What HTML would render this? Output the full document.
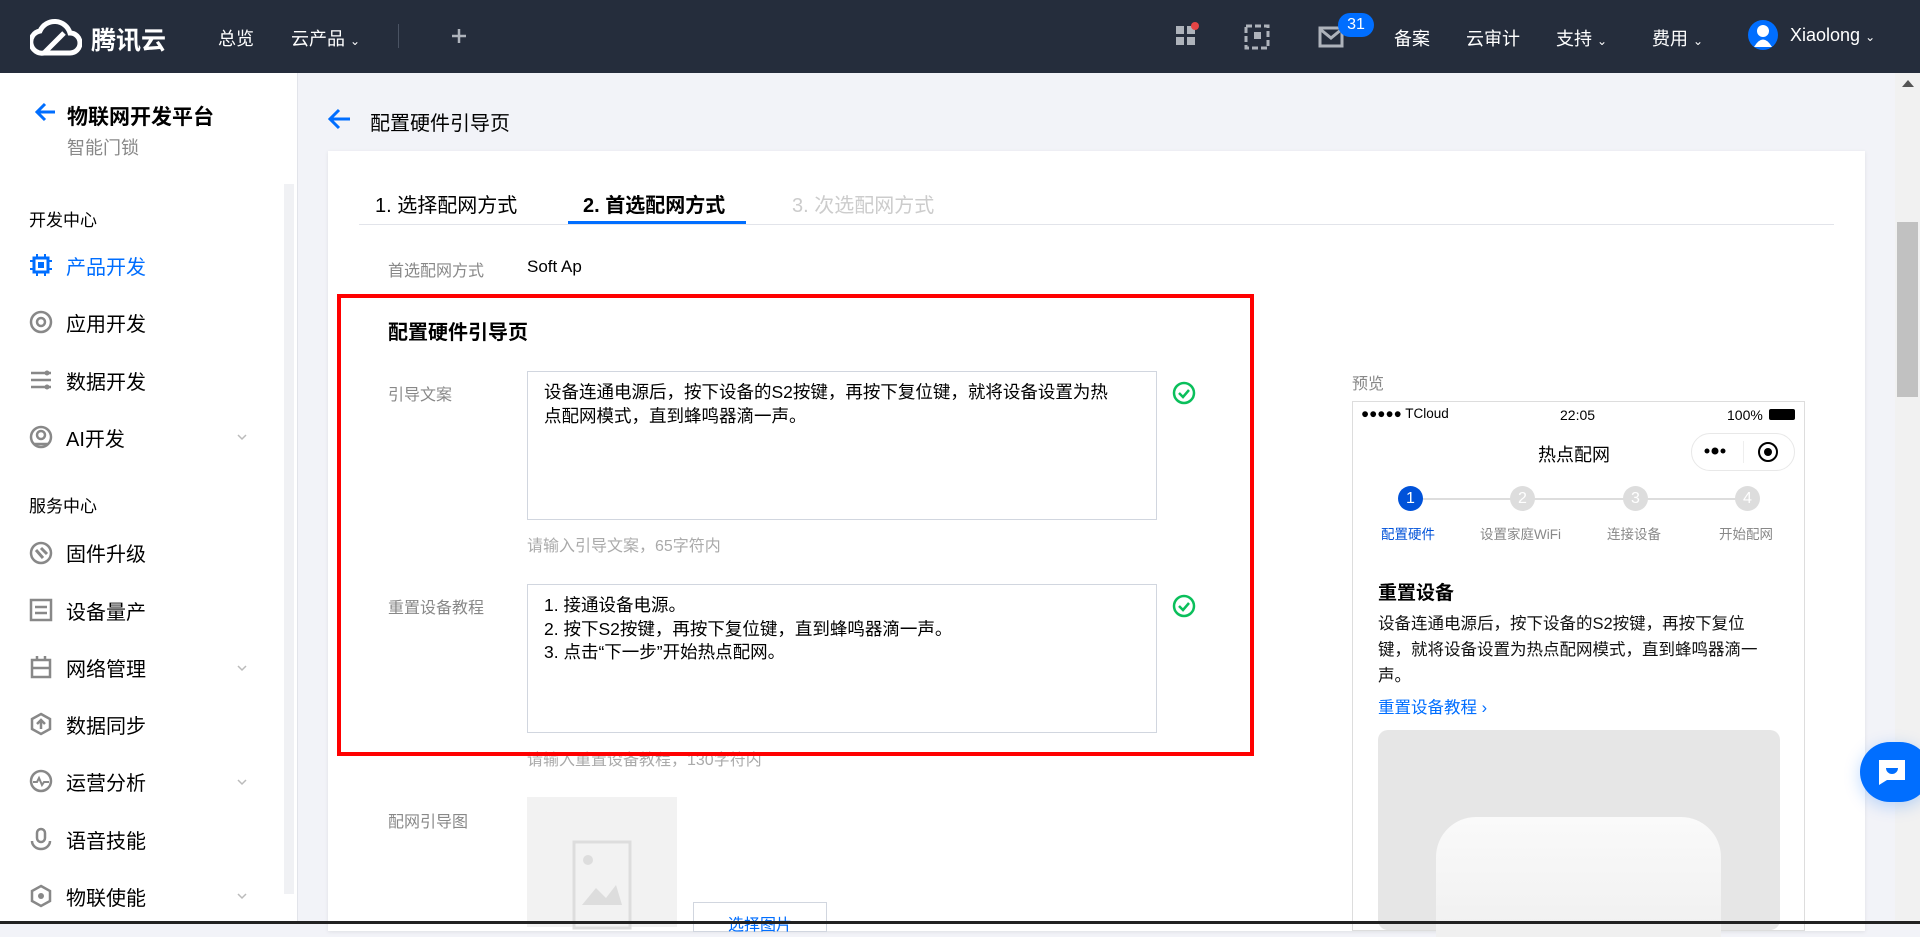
<!DOCTYPE html>
<html><head><meta charset="utf-8"><style>
*{margin:0;padding:0;box-sizing:border-box}
body{width:1920px;height:924px;overflow:hidden;background:#f2f3f8;font-family:"Liberation Sans","Noto Sans CJK SC",sans-serif;position:relative;color:#000}
.a{position:absolute;white-space:nowrap}
.hdr{position:absolute;left:0;top:0;width:1920px;height:73px;background:#252d3c}
.hw{color:#fff;font-size:18px}
.side{position:absolute;left:0;top:73px;width:298px;height:851px;background:#fff;border-right:1px solid #e2e4ea}
.mi{font-size:20px;color:#000;left:66px}
.ic{left:29px;width:24px;height:24px}
.chev{left:236px;width:12px;height:8px}
.card{position:absolute;left:328px;top:151px;width:1537px;height:780px;background:#fff;box-shadow:0 1px 4px rgba(0,0,0,.08)}
.lbl{font-size:16px;color:#888}
.ta{position:absolute;border:1px solid #d1d6df;background:#fff;font-size:17.5px;line-height:23.5px;padding:9px 16px;color:#000;white-space:nowrap}
.hint{font-size:16px;color:#aaa}
</style></head><body>
<div class="hdr"></div>
<svg class="a" style="left:30px;top:17px" width="52" height="40" viewBox="0 0 52 40"><path d="M14 36 H40 A10 10 0 0 0 40 16 A16 16 0 0 0 10 14 A11 11 0 0 0 14 36 Z" fill="none" stroke="#fff" stroke-width="5"/><path d="M14 36 L34 16" stroke="#fff" stroke-width="5"/></svg>
<div class="a" style="left:91px;top:21px;color:#fff;font-size:25px;font-weight:bold">腾讯云</div>
<div class="a hw" style="left:218px;top:25px">总览</div>
<div class="a hw" style="left:291px;top:25px">云产品 <span style="font-size:12px">⌄</span></div>
<div class="a" style="left:398px;top:24px;width:1px;height:24px;background:#4a5363"></div>
<svg class="a" style="left:451px;top:28px" width="16" height="16"><path d="M8 1v14M1 8h14" stroke="#aeb3bb" stroke-width="2.5"/></svg>
<svg class="a" style="left:1174px;top:22px" width="26" height="28"><rect x="2" y="4" width="8" height="8" fill="#aeb3bb"/><rect x="13" y="4" width="8" height="8" fill="#aeb3bb"/><rect x="2" y="15" width="8" height="8" fill="#aeb3bb"/><rect x="13" y="15" width="8" height="8" fill="#aeb3bb"/><circle cx="21" cy="4" r="4" fill="#e54545"/></svg>
<svg class="a" style="left:1244px;top:24px" width="26" height="26"><rect x="2" y="2" width="22" height="22" fill="none" stroke="#aeb3bb" stroke-width="3" stroke-dasharray="6 3"/><rect x="10" y="8" width="7" height="7" fill="#aeb3bb"/></svg>
<svg class="a" style="left:1318px;top:26px" width="26" height="22"><rect x="2" y="2" width="22" height="18" fill="none" stroke="#aeb3bb" stroke-width="3"/><path d="M2 3 L13 12 L24 3" fill="none" stroke="#aeb3bb" stroke-width="3"/></svg>
<div class="a" style="left:1338px;top:13px;width:36px;height:24px;border-radius:12px;background:#006eff;color:#fff;font-size:16px;text-align:center;line-height:24px">31</div>
<div class="a hw" style="left:1394px;top:25px">备案</div>
<div class="a hw" style="left:1466px;top:25px">云审计</div>
<div class="a hw" style="left:1556px;top:25px">支持 <span style="font-size:12px">⌄</span></div>
<div class="a hw" style="left:1652px;top:25px">费用 <span style="font-size:12px">⌄</span></div>
<svg class="a" style="left:1748px;top:20px" width="30" height="30"><circle cx="15" cy="15" r="15" fill="#006eff"/><circle cx="15" cy="11" r="6" fill="#fff"/><path d="M6 27 Q15 12 24 27 Z" fill="#fff"/></svg>
<div class="a hw" style="left:1790px;top:25px">Xiaolong <span style="font-size:12px">⌄</span></div>

<div class="side"></div>
<div class="a" style="left:284px;top:184px;width:10px;height:710px;background:#f0f1f4"></div>
<svg class="a" style="left:35px;top:102px" width="22" height="20"><path d="M20 10H3M10 2L2 10L10 18" fill="none" stroke="#006eff" stroke-width="3"/></svg>
<div class="a" style="left:67px;top:101px;font-size:21px;font-weight:bold">物联网开发平台</div>
<div class="a" style="left:67px;top:134px;font-size:18px;color:#888">智能门锁</div>
<div class="a" style="left:29px;top:206px;font-size:17px">开发中心</div>
<svg class="a ic" style="top:253px"><rect x="5" y="5" width="14" height="14" fill="none" stroke="#006eff" stroke-width="3"/><rect x="9" y="9" width="6" height="6" fill="#006eff"/><path d="M8 1v4M16 1v4M8 19v4M16 19v4M1 8h4M1 16h4M19 8h4M19 16h4" stroke="#006eff" stroke-width="2"/></svg>
<div class="a mi" style="top:251px;color:#006eff">产品开发</div>
<svg class="a ic" style="top:310px"><circle cx="12" cy="12" r="10" fill="none" stroke="#888" stroke-width="2.5"/><circle cx="12" cy="12" r="4" fill="none" stroke="#888" stroke-width="2.5"/></svg>
<div class="a mi" style="top:308px">应用开发</div>
<svg class="a ic" style="top:368px"><path d="M2 5h20M2 12h20M2 19h20" stroke="#888" stroke-width="2.5"/><circle cx="18" cy="5" r="2.5" fill="#888"/><circle cx="18" cy="19" r="2.5" fill="#888"/></svg>
<div class="a mi" style="top:366px">数据开发</div>
<svg class="a ic" style="top:425px"><circle cx="12" cy="12" r="10" fill="none" stroke="#888" stroke-width="2.5"/><circle cx="12" cy="10" r="4" fill="none" stroke="#888" stroke-width="2.5"/><path d="M5 19h14" stroke="#888" stroke-width="2.5"/></svg>
<div class="a mi" style="top:423px">AI开发</div>
<svg class="a chev" style="top:433px"><path d="M2 2l4 4 4-4" fill="none" stroke="#bbb" stroke-width="1.5"/></svg>
<div class="a" style="left:29px;top:492px;font-size:17px">服务中心</div>
<svg class="a ic" style="top:541px"><circle cx="12" cy="12" r="10" fill="none" stroke="#888" stroke-width="2.5"/><path d="M7 9l7 8M12 7l6 6" stroke="#888" stroke-width="3"/></svg>
<div class="a mi" style="top:538px">固件升级</div>
<svg class="a ic" style="top:598px"><rect x="2" y="2" width="20" height="20" fill="none" stroke="#888" stroke-width="2.5"/><path d="M6 9h12M6 15h12" stroke="#888" stroke-width="2.5"/></svg>
<div class="a mi" style="top:596px">设备量产</div>
<svg class="a ic" style="top:655px"><rect x="3" y="5" width="18" height="17" fill="none" stroke="#888" stroke-width="2.5"/><path d="M3 13h18M8 1v4M16 1v4" stroke="#888" stroke-width="2.5"/></svg>
<div class="a mi" style="top:653px">网络管理</div>
<svg class="a chev" style="top:664px"><path d="M2 2l4 4 4-4" fill="none" stroke="#bbb" stroke-width="1.5"/></svg>
<svg class="a ic" style="top:712px"><path d="M12 2L21 7V17L12 22L3 17V7Z" fill="none" stroke="#888" stroke-width="2.5"/><path d="M12 17V8M8 12l4-4 4 4" fill="none" stroke="#888" stroke-width="2.5"/></svg>
<div class="a mi" style="top:710px">数据同步</div>
<svg class="a ic" style="top:769px"><circle cx="12" cy="12" r="10" fill="none" stroke="#888" stroke-width="2.5"/><path d="M4 13h4l2-4 3 7 2-3h5" fill="none" stroke="#888" stroke-width="2"/></svg>
<div class="a mi" style="top:767px">运营分析</div>
<svg class="a chev" style="top:778px"><path d="M2 2l4 4 4-4" fill="none" stroke="#bbb" stroke-width="1.5"/></svg>
<svg class="a ic" style="top:827px"><rect x="8" y="2" width="8" height="13" rx="4" fill="none" stroke="#888" stroke-width="2.5"/><path d="M3 14a9 8 0 0 0 18 0" fill="none" stroke="#888" stroke-width="2.5"/></svg>
<div class="a mi" style="top:825px">语音技能</div>
<svg class="a ic" style="top:884px"><path d="M12 2L21 7V17L12 22L3 17V7Z" fill="none" stroke="#888" stroke-width="2.5"/><circle cx="12" cy="12" r="3" fill="#888"/></svg>
<div class="a mi" style="top:882px">物联使能</div>
<svg class="a chev" style="top:892px"><path d="M2 2l4 4 4-4" fill="none" stroke="#bbb" stroke-width="1.5"/></svg>

<svg class="a" style="left:328px;top:108px" width="24" height="22"><path d="M22 11H3M11 2L2 11L11 20" fill="none" stroke="#006eff" stroke-width="3"/></svg>
<div class="a" style="left:370px;top:107px;font-size:20px;color:#000">配置硬件引导页</div>

<div class="card"></div>
<div class="a" style="left:375px;top:189px;font-size:20px">1. 选择配网方式</div>
<div class="a" style="left:583px;top:189px;font-size:20px;font-weight:bold">2. 首选配网方式</div>
<div class="a" style="left:792px;top:189px;font-size:20px;color:#ccc">3. 次选配网方式</div>
<div class="a" style="left:359px;top:224px;width:1475px;height:1px;background:#e2e4ea"></div>
<div class="a" style="left:568px;top:221px;width:178px;height:3px;background:#006eff"></div>
<div class="a lbl" style="left:388px;top:257px">首选配网方式</div>
<div class="a" style="left:527px;top:257px;font-size:17px">Soft Ap</div>

<div class="a" style="left:388px;top:316px;font-size:20px;font-weight:bold">配置硬件引导页</div>
<div class="a lbl" style="left:388px;top:381px">引导文案</div>
<div class="ta" style="left:527px;top:371px;width:630px;height:149px">设备连通电源后，按下设备的S2按键，再按下复位键，就将设备设置为热<br>点配网模式，直到蜂鸣器滴一声。</div>
<svg class="a" style="left:1172px;top:381px" width="24" height="24"><circle cx="12" cy="12" r="10" fill="none" stroke="#0abf5b" stroke-width="2.5"/><path d="M7 12l4 4 6-7" fill="none" stroke="#0abf5b" stroke-width="2.5"/></svg>
<div class="a hint" style="left:527px;top:532px">请输入引导文案，65字符内</div>
<div class="a lbl" style="left:388px;top:594px">重置设备教程</div>
<div class="ta" style="left:527px;top:584px;width:630px;height:149px">1. 接通设备电源。<br>2. 按下S2按键，再按下复位键，直到蜂鸣器滴一声。<br>3. 点击“下一步”开始热点配网。</div>
<svg class="a" style="left:1172px;top:594px" width="24" height="24"><circle cx="12" cy="12" r="10" fill="none" stroke="#0abf5b" stroke-width="2.5"/><path d="M7 12l4 4 6-7" fill="none" stroke="#0abf5b" stroke-width="2.5"/></svg>
<div class="a hint" style="left:527px;top:746px">请输入重置设备教程，130字符内</div>
<div class="a" style="left:337px;top:294px;width:917px;height:462px;border:4px solid #f00"></div>

<div class="a lbl" style="left:388px;top:808px">配网引导图</div>
<div class="a" style="left:527px;top:797px;width:150px;height:130px;background:#f2f2f2"></div>
<svg class="a" style="left:572px;top:840px" width="60" height="90"><rect x="2" y="2" width="56" height="86" fill="none" stroke="#ddd" stroke-width="3"/><circle cx="16" cy="20" r="5" fill="#ddd"/><path d="M10 65 L24 48 L34 58 L44 45 L50 65Z" fill="#ddd"/></svg>
<div class="a" style="left:693px;top:902px;width:134px;height:30px;border:1px solid #d1d6df;color:#006eff;font-size:16px;text-align:center;padding-top:8px">选择图片</div>

<div class="a lbl" style="left:1352px;top:370px">预览</div>
<div class="a" style="left:1352px;top:401px;width:453px;height:530px;border:1px solid #ddd;background:#fff"></div>
<div class="a" style="left:1361px;top:406px;font-size:13.5px;color:#000">●●●●● TCloud</div>
<div class="a" style="left:1560px;top:407px;font-size:14px">22:05</div>
<div class="a" style="left:1727px;top:407px;font-size:14px">100%</div>
<div class="a" style="left:1769px;top:409px;width:26px;height:11px;background:#000;border-radius:2px"></div>
<div class="a" style="left:1538px;top:441px;font-size:18px">热点配网</div>
<div class="a" style="left:1691px;top:433px;width:104px;height:38px;border:1px solid #e8e8e8;border-radius:19px"></div>
<svg class="a" style="left:1703px;top:446px" width="24" height="10"><circle cx="4" cy="5" r="2.5"/><circle cx="12" cy="5" r="3.5"/><circle cx="20" cy="5" r="2.5"/></svg>
<div class="a" style="left:1743px;top:441px;width:1px;height:22px;background:#eee"></div>
<div class="a" style="left:1758px;top:442px;width:20px;height:20px;border:2.5px solid #000;border-radius:50%"></div>
<div class="a" style="left:1764px;top:448px;width:8px;height:8px;background:#000;border-radius:50%"></div>
<div class="a" style="left:1410px;top:498px;width:337px;height:2px;background:#ddd"></div>
<div class="a" style="left:1398px;top:486px;width:25px;height:25px;border-radius:50%;background:#0052d9;color:#fff;font-size:16px;text-align:center;line-height:25px">1</div>
<div class="a" style="left:1510px;top:486px;width:25px;height:25px;border-radius:50%;background:#ddd;color:#fff;font-size:16px;text-align:center;line-height:25px">2</div>
<div class="a" style="left:1623px;top:486px;width:25px;height:25px;border-radius:50%;background:#ddd;color:#fff;font-size:16px;text-align:center;line-height:25px">3</div>
<div class="a" style="left:1735px;top:486px;width:25px;height:25px;border-radius:50%;background:#ddd;color:#fff;font-size:16px;text-align:center;line-height:25px">4</div>
<div class="a" style="left:1381px;top:523px;font-size:13.5px;color:#0052d9">配置硬件</div>
<div class="a" style="left:1480px;top:523px;font-size:13.5px;color:#888">设置家庭WiFi</div>
<div class="a" style="left:1607px;top:523px;font-size:13.5px;color:#888">连接设备</div>
<div class="a" style="left:1719px;top:523px;font-size:13.5px;color:#888">开始配网</div>
<div class="a" style="left:1378px;top:578px;font-size:19px;font-weight:bold">重置设备</div>
<div class="a" style="left:1378px;top:611px;width:380px;font-size:16.5px;line-height:26px;white-space:normal;color:#111">设备连通电源后，按下设备的S2按键，再按下复位键，就将设备设置为热点配网模式，直到蜂鸣器滴一声。</div>
<div class="a" style="left:1378px;top:694px;font-size:16.5px;color:#006eff">重置设备教程 ›</div>
<div class="a" style="left:1378px;top:730px;width:402px;height:200px;background:#e6e6e6;border-radius:10px"></div>
<div class="a" style="left:1436px;top:817px;width:285px;height:120px;background:linear-gradient(#fafafa,#f0f0f0);border-radius:40px 40px 0 0"></div>

<div class="a" style="left:1895px;top:73px;width:25px;height:851px;background:#f1f1f1"></div>
<div class="a" style="left:1897px;top:222px;width:21px;height:175px;background:#c1c1c1"></div>
<div class="a" style="left:1902px;top:80px;width:0;height:0;border-left:6px solid transparent;border-right:6px solid transparent;border-bottom:7px solid #555"></div>
<div class="a" style="left:1860px;top:742px;width:70px;height:60px;border-radius:30px;background:#006eff;box-shadow:0 4px 16px rgba(0,110,255,.25)"></div>
<svg class="a" style="left:1878px;top:759px" width="28" height="26"><path d="M1 1H27V21H9L1 26Z" fill="#fff"/><path d="M8 9 A6 6 0 0 0 20 9Z" fill="#006eff"/></svg>
<div class="a" style="left:0;top:921px;width:1920px;height:3px;background:#222"></div>
</body></html>
